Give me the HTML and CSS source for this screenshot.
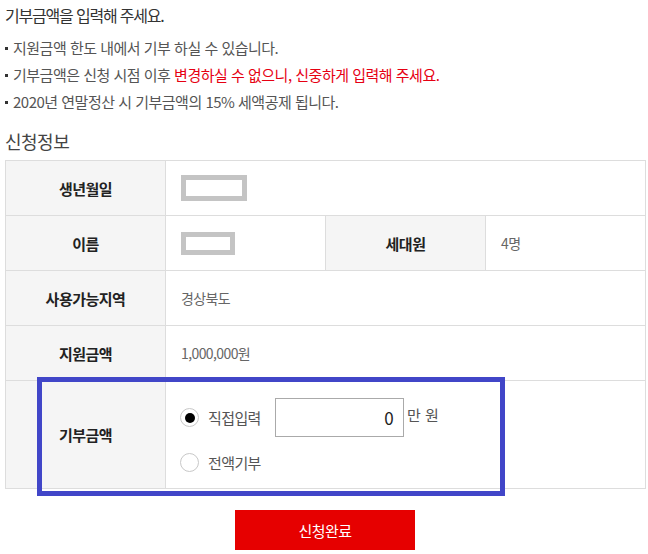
FILE: index.html
```html
<!DOCTYPE html>
<html lang="ko">
<head>
<meta charset="utf-8">
<link rel="stylesheet" href="styles.css">
</head>
<body>
<div class="page">
  <h1 class="title">기부금액을 입력해 주세요.</h1>
  <ul class="notes">
    <li>지원금액 한도 내에서 기부 하실 수 있습니다.</li>
    <li>기부금액은 신청 시점 이후 <span class="red">변경하실 수 없으니, 신중하게 입력해 주세요.</span></li>
    <li>2020년 연말정산 시 기부금액의 15% 세액공제 됩니다.</li>
  </ul>
  <h2 class="sub">신청정보</h2>
  <div class="table-wrap">
    <table class="info">
      <colgroup>
        <col class="c"><col class="c"><col class="c"><col class="c">
      </colgroup>
      <tr>
        <th>생년월일</th>
        <td colspan="3"><span class="mask mask-lg"></span></td>
      </tr>
      <tr>
        <th>이름</th>
        <td><span class="mask mask-sm"></span></td>
        <th>세대원</th>
        <td>4명</td>
      </tr>
      <tr>
        <th>사용가능지역</th>
        <td colspan="3">경상북도</td>
      </tr>
      <tr>
        <th>지원금액</th>
        <td colspan="3">1,000,000원</td>
      </tr>
      <tr class="tall">
        <th>기부금액</th>
        <td colspan="3" class="choice">
          <div class="opt">
            <span class="radio on"></span>
            <span class="opt-label">직접입력</span>
            <span class="amount">0</span>
            <span class="unit">만 원</span>
          </div>
          <div class="opt opt2">
            <span class="radio"></span>
            <span class="opt-label">전액기부</span>
          </div>
        </td>
      </tr>
    </table>
    <div class="highlight"></div>
  </div>
  <div class="actions">
    <button class="submit">신청완료</button>
  </div>
</div>
</body>
</html>
```

FILE: styles.css
```css
* { box-sizing: border-box; }
html, body { margin: 0; padding: 0; background: #fff; }
body {
  font-family: "Noto Sans CJK KR", "Noto Sans", sans-serif;
  color: #555;
}
.page { padding: 0 4px 0 5px; width: 648px; }
.title {
  margin: 0;
  padding-top: 4px;
  font-size: 16px;
  font-weight: 400;
  line-height: 22px;
  color: #333;
  letter-spacing: -1.2px;
}
.notes {
  list-style: none;
  margin: 8px 0 0;
  padding: 0;
}
.notes li {
  position: relative;
  padding-left: 8px;
  font-size: 15px;
  line-height: 27px;
  color: #555;
  letter-spacing: -0.5px;
}
.notes li::before {
  content: "";
  position: absolute;
  left: 0;
  top: 13px;
  width: 3px;
  height: 3px;
  background: #333;
}
.red { color: #e60012; }
.sub {
  margin: 14px 0 0;
  font-size: 18px;
  font-weight: 400;
  line-height: 24px;
  color: #444;
  letter-spacing: -0.5px;
}
.table-wrap { position: relative; margin-top: 7px; width: 640px; }
.info {
  width: 640px;
  border-collapse: collapse;
  table-layout: fixed;
  border: 1px solid #ddd;
}
.info col.c { width: 160px; }
.info th, .info td {
  border: 1px solid #ddd;
  height: 55px;
  padding: 0;
  font-size: 14px;
}
.info th {
  background: #f5f5f5;
  color: #222;
  font-weight: 700;
  font-size: 15px;
  text-align: center;
  letter-spacing: -0.5px;
}
.info td {
  color: #666;
  padding-left: 15px;
  text-align: left;
  letter-spacing: -0.6px;
}
.info tr.tall th, .info tr.tall td { height: 108px; }
.info td.choice { vertical-align: top; padding-top: 17px; }
.mask {
  display: block;
  border: 5px solid #c4c4c4;
  background: #fff;
}
.mask-lg { width: 66px; height: 26px; }
.mask-sm { width: 54px; height: 23px; }
.opt {
  display: flex;
  align-items: center;
  height: 39px;
}
.opt2 { margin-top: 13px; height: 24px; }
.radio {
  width: 19px;
  height: 19px;
  border: 1px solid #c8c8c8;
  border-radius: 50%;
  background: #fff;
  display: inline-flex;
  align-items: center;
  justify-content: center;
  margin-left: -1px;
}
.radio.on::after {
  content: "";
  width: 10px;
  height: 10px;
  border-radius: 50%;
  background: #000;
}
.opt-label {
  margin-left: 9px;
  font-size: 15px;
  color: #555;
  width: 67px;
}
.amount {
  width: 129px;
  height: 39px;
  border: 1px solid #aaa;
  text-align: right;
  padding-right: 10px;
  font-size: 17px;
  line-height: 37px;
  color: #222;
}
.unit {
  margin-left: 3px;
  font-size: 15px;
  color: #555;
  align-self: flex-start;
  margin-top: 6px;
  letter-spacing: 0;
}
.highlight {
  position: absolute;
  left: 32px;
  top: 217px;
  width: 468px;
  height: 119px;
  border: 5px solid #4146c8;
  pointer-events: none;
}
.actions {
  display: flex;
  justify-content: center;
  width: 640px;
  margin-top: 21px;
}
.submit {
  width: 180px;
  height: 40px;
  background: #e60000;
  border: 0;
  color: #fff;
  font-family: "Noto Sans CJK KR", sans-serif;
  font-size: 15px;
  letter-spacing: -0.5px;
}
```
